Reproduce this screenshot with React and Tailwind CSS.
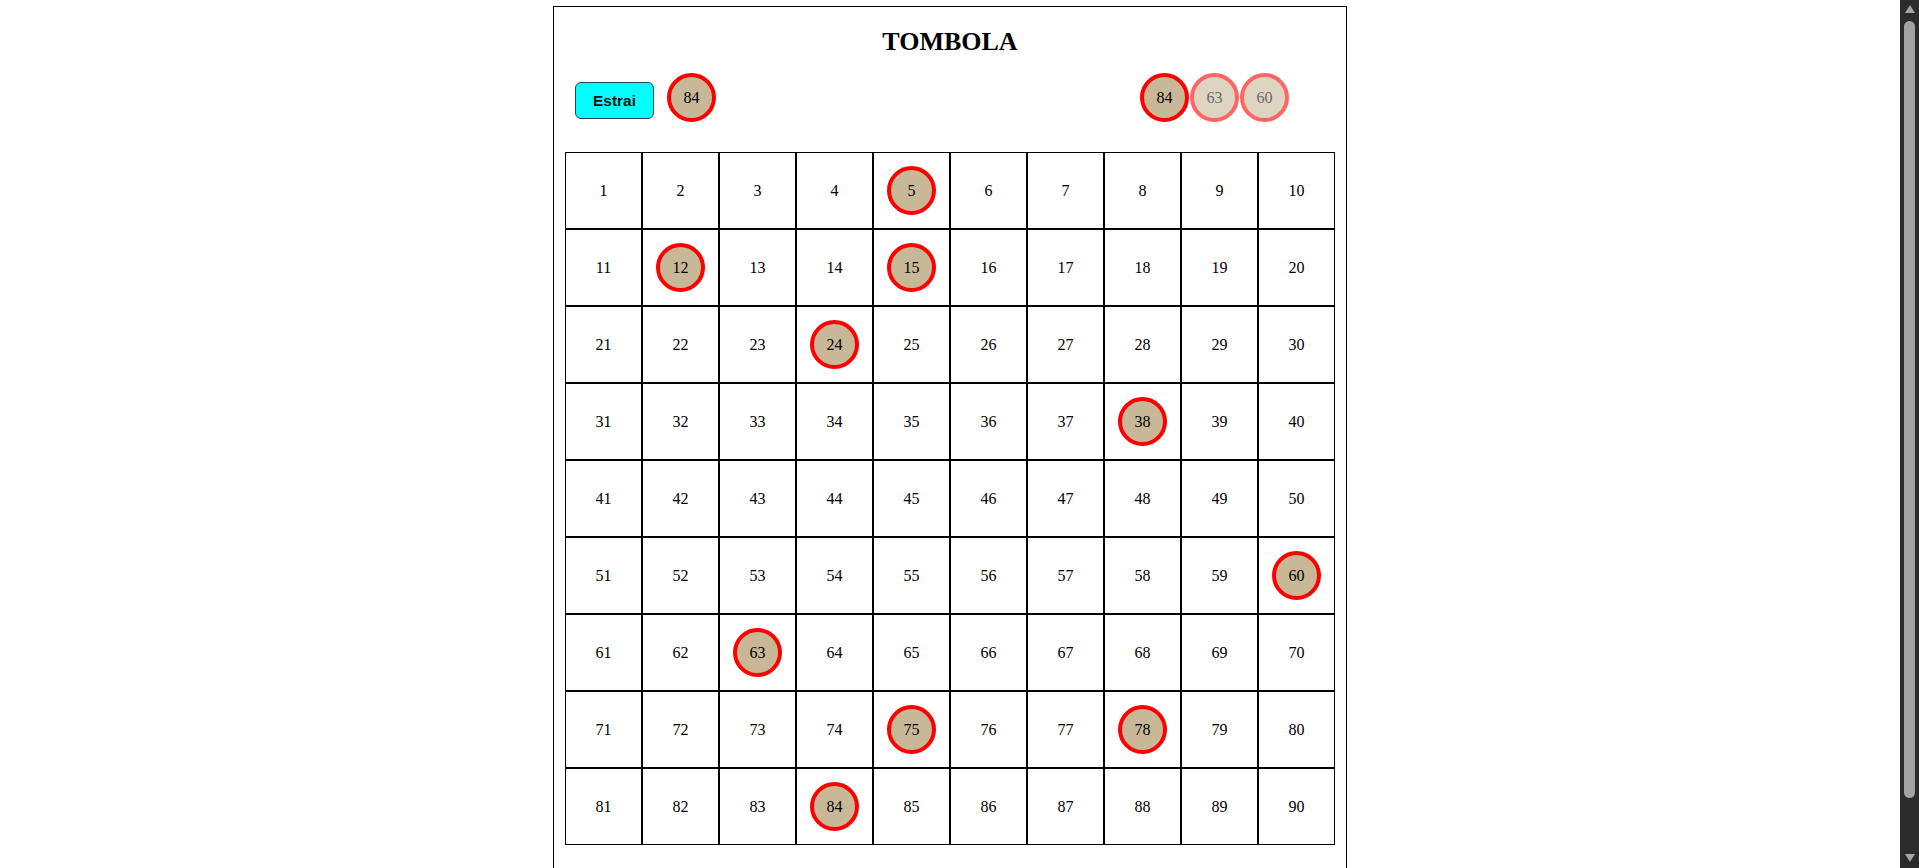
import React from "react";

const drawn = [5, 12, 15, 24, 38, 60, 63, 75, 78, 84];

function Ball({ n, faded }) {
  return (
    <div
      className={
        "w-[49px] h-[49px] rounded-full border-[4px] border-[#ff0000] bg-[#c8b898] flex items-center justify-center text-[16px] text-black " +
        (faded ? "opacity-60" : "")
      }
      style={{ fontFamily: '"Liberation Serif", "Times New Roman", serif' }}
    >
      {n}
    </div>
  );
}

function Scrollbar() {
  return (
    <div className="w-[19px] h-full bg-[#2b2b2b] flex flex-col items-center shrink-0">
      <div className="mt-[5px] w-0 h-0 border-l-[5px] border-r-[5px] border-b-[8px] border-l-transparent border-r-transparent border-b-[#a3a3a3]" />
      <div className="mt-[8px] w-[11px] h-[777px] rounded-[6px] bg-[#a3a3a3]" />
      <div className="mt-auto mb-[6px] w-0 h-0 border-l-[5px] border-r-[5px] border-t-[8px] border-l-transparent border-r-transparent border-t-[#a3a3a3]" />
    </div>
  );
}

export default function App() {
  const nums = Array.from({ length: 90 }, (_, i) => i + 1);
  return (
    <div className="h-[868px] overflow-hidden bg-white flex">
      <div className="flex-1 overflow-hidden">
        <div
          className="w-[794px] mx-auto mt-[6px] border border-black pb-[40px]"
          style={{ fontFamily: '"Liberation Serif", "Times New Roman", serif' }}
        >
          <h1 className="text-center text-[26px] font-bold leading-[30px] mt-[20px] text-black">
            TOMBOLA
          </h1>
          <div className="flex items-start justify-between mt-[16px] pl-[21px] pr-[57px] h-[49px]">
            <div className="flex items-start gap-[13px]">
              <button
                className="mt-[9px] w-[79px] h-[37px] bg-[#00ffff] border border-[#1f4a50] rounded-[6px] text-[15.5px] font-bold text-[#111]"
                style={{ fontFamily: '"Liberation Sans", Arial, sans-serif' }}
              >
                Estrai
              </button>
              <Ball n={84} />
            </div>
            <div className="flex items-start gap-[1px]">
              <Ball n={84} />
              <Ball n={63} faded />
              <Ball n={60} faded />
            </div>
          </div>
          <div className="ml-[11px] mt-[30px] grid grid-cols-[repeat(10,77px)] w-[770px]">
            {nums.map((n) => (
              <div
                key={n}
                className="h-[77px] border border-black flex items-center justify-center text-[16px] text-black"
              >
                {drawn.includes(n) ? <Ball n={n} /> : n}
              </div>
            ))}
          </div>
        </div>
      </div>
      <Scrollbar />
    </div>
  );
}
